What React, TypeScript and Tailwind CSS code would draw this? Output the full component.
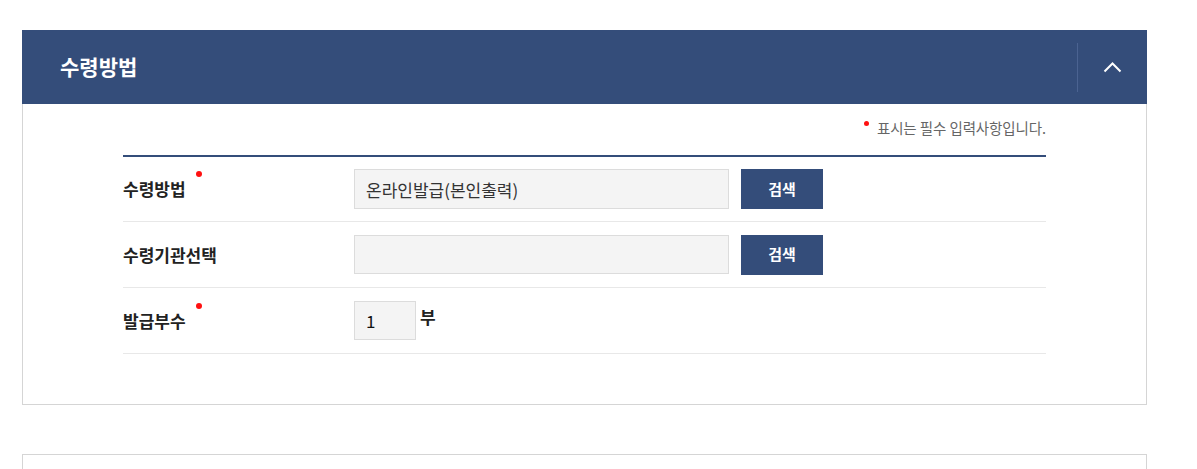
import React from "react";

const navy = "bg-[#344d7a]";

function Label({ text, required }: { text: string; required?: boolean }) {
  return (
    <span className="relative inline-block pr-[16px] text-[17px] font-bold text-[#222] leading-[20px]">
      {text}
      {required && (
        <span className="absolute right-0 top-[-8px] h-[6px] w-[6px] rounded-full bg-[#f11]" />
      )}
    </span>
  );
}

function SearchButton() {
  return (
    <button className={`${navy} ml-[12px] h-[40px] w-[82px] text-[15px] font-bold text-white`}>
      검색
    </button>
  );
}

export default function App() {
  return (
    <div
      className="h-[469px] overflow-hidden bg-white pt-[30px]"
      style={{ fontFamily: '"Noto Sans CJK KR", "Noto Sans", sans-serif' }}
    >
      <section className="ml-[22px] w-[1125px]">
        <header className={`${navy} flex h-[74px] items-center`}>
          <h2 className="flex-1 pl-[38px] text-[21px] font-bold text-white">수령방법</h2>
          <div className="h-[49px] w-px bg-[#4b6391]" />
          <button className="flex h-full w-[69px] items-center justify-center">
            <svg width="19" height="12" viewBox="0 0 19 12" fill="none">
              <polyline points="1.5,10.5 9.5,2.5 17.5,10.5" stroke="#fff" strokeWidth="2" />
            </svg>
          </button>
        </header>

        <div className="h-[301px] border-x border-b border-[#d5d5d5] px-[100px] pt-[14px]">
          <p className="flex h-[20px] items-center justify-end text-[14.5px] tracking-[-0.1px] text-[#666]">
            <span className="mr-[8px] mt-[-10px] h-[5px] w-[5px] rounded-full bg-[#f11]" />
            표시는 필수 입력사항입니다.
          </p>

          <div className="mt-[17px] border-t-2 border-[#344d7a]">
            <div className="flex h-[65px] items-center border-b border-[#e8e8e8]">
              <div className="w-[231px]">
                <Label text="수령방법" required />
              </div>
              <input
                readOnly
                value="온라인발급(본인출력)"
                className="h-[40px] w-[375px] border border-[#dcdcdc] bg-[#f4f4f4] px-[11px] text-[17px] text-[#333] outline-none"
              />
              <SearchButton />
            </div>

            <div className="flex h-[66px] items-center border-b border-[#e8e8e8]">
              <div className="w-[231px]">
                <Label text="수령기관선택" />
              </div>
              <input
                readOnly
                value=""
                className="h-[39px] w-[375px] border border-[#dcdcdc] bg-[#f4f4f4] px-[11px] text-[17px] text-[#333] outline-none"
              />
              <SearchButton />
            </div>

            <div className="flex h-[66px] items-center border-b border-[#e8e8e8]">
              <div className="w-[231px]">
                <Label text="발급부수" required />
              </div>
              <input
                readOnly
                value="1"
                className="h-[39px] w-[62px] border border-[#dcdcdc] bg-[#f4f4f4] px-[11px] text-[17px] text-[#111] outline-none"
              />
              <span className="ml-[4px] mt-[-8px] text-[17px] font-bold text-[#222]">부</span>
            </div>
          </div>
        </div>
      </section>

      <section className="ml-[22px] mt-[49px] h-[40px] w-[1125px] border-x border-t border-[#d5d5d5]" />
    </div>
  );
}
